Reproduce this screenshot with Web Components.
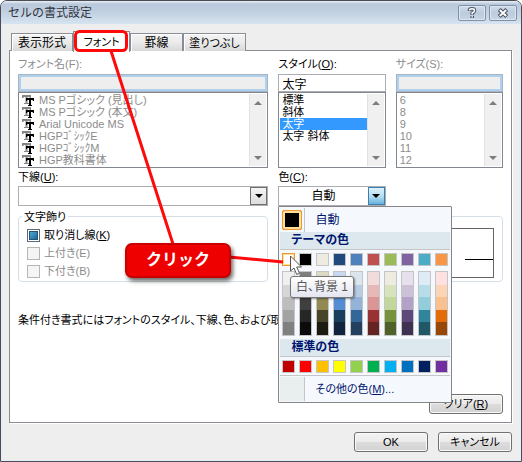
<!DOCTYPE html>
<html lang="ja">
<head>
<meta charset="utf-8">
<title>セルの書式設定</title>
<style>
body{margin:0;background:#fff;color:#000;font:11px/14px "Liberation Sans","Noto Sans CJK JP",sans-serif;font-feature-settings:"palt"}
</style>
</head>
<body>
<format-dialog></format-dialog>
<script>
const define=(name,html,setup)=>customElements.define(name,class extends HTMLElement{
  connectedCallback(){
    if(this.shadowRoot)return;
    const r=this.attachShadow({mode:'open'});
    r.innerHTML='<style>*{box-sizing:border-box}:host{box-sizing:border-box}button,input,select{font:inherit;font-feature-settings:inherit;color:inherit;margin:0;outline:none}</style>'+(typeof html==='function'?html(this):html);
    if(setup)setup(this,r);
  }
});

define('caption-button',el=>`<style>
:host{display:block}
button{display:grid;place-items:center;width:28px;height:16px;padding:0;border:1px solid #8291a8;border-radius:2px;background:linear-gradient(#cfdbe9,#bccbdc 50%,#c9d6e5);box-shadow:inset 0 0 0 1px #dce6f0}
svg{display:block}
</style><button aria-label="${el.getAttribute('label')}">${el.getAttribute('kind')==='help'
?'<svg width="10" height="12" viewBox="0 0 10 12"><path d="M2.5 4V3Q2.5 1.8 5 1.8T7.5 3.4Q7.5 4.8 5.2 6V8M5.2 9V11" fill="none" stroke="#4b5363" stroke-width="3.6"/><path d="M2.5 3.6V3Q2.5 1.8 5 1.8T7.5 3.4Q7.5 4.8 5.2 6V7.4M5.2 9.3V10.5" fill="none" stroke="#fff" stroke-width="1.6"/></svg>'
:'<svg width="12" height="10" viewBox="0 0 12 10"><path d="M2.2 1.5L9.8 8.5M9.8 1.5L2.2 8.5" stroke="#4b5363" stroke-width="4.2"/><path d="M2.8 2L9.2 8M9.2 2L2.8 8" stroke="#fff" stroke-width="2"/></svg>'}</button>`);

define('tab-item',`<style>
:host{display:block}
:host([kanji]){font-size:12px}
button{display:block;height:18px;width:100%;padding:0;line-height:16px;border:1px solid #898c95;border-bottom:0;background:linear-gradient(#f3f3f3,#ececec 45%,#d8d8d8);box-shadow:inset 1px 1px #fff}
:host([selected]) button{height:21px;margin-bottom:-1px;background:#fff;box-shadow:none}
</style><button role="tab"><slot></slot></button>`);

define('text-field',el=>`<style>
:host{display:block}
label{display:block;height:18px;line-height:16px}
input{display:block;width:100%;height:18px;padding:0 3px;border:1px solid #abadb3;background:#fff;border-radius:0;font-size:12px}
:host([disabled]) label{color:#8c8c8c}
:host([disabled]) input{background:#eee;box-shadow:inset 0 0 0 2px #b1d0ee;border-color:#a6b4c4}
</style><label for="f"><slot></slot></label><input id="f" value="${el.getAttribute('value')||''}" ${el.hasAttribute('disabled')?'disabled':''}>`);

define('list-box',el=>{
  const icon='<svg width="12" height="11" viewBox="0 0 12 11"><path d="M0 0h9v3H7.5V2H5.5v6H7v1H2V8h1.5V2H1.5v1H0z" fill="#858585"/><path d="M4 3h8v3h-1.2V5H9v5h1v1H6v-1h1V5H5.2v1H4z" fill="#000"/></svg>';
  const items=el.getAttribute('items').split('|'),sel=el.getAttribute('selected');
  return `<style>
:host{display:flex;height:76px;border:1px solid #828790;background:#fff;padding:1px}
ul{flex:1;min-width:0;margin:0;padding:0;list-style:none}
li{display:flex;align-items:center;gap:5px;height:12px;line-height:12px;padding-left:2px;white-space:nowrap}
svg{display:block;flex:none}
li[aria-selected=true]{background:#39f;color:#fff}
:host([disabled]) ul{color:#8c8c8c}
.bar{width:17px;display:flex;flex-direction:column;justify-content:space-between;align-items:center;padding:7px 0 6px;background:#f0f0f0;border-left:1px solid #e2e2e2}
i{border:4px solid transparent;border-top:0;border-bottom:4px solid #7d7d7d}
i+i{transform:rotate(180deg)}
</style><ul role="listbox" aria-label="${el.getAttribute('label')}">${items.map(t=>`<li role="option" aria-selected="${t===sel}">${el.hasAttribute('icons')?icon:''}<span>${t}</span></li>`).join('')}</ul><div class="bar"><i></i><i></i></div>`});

define('combo-box',el=>`<style>
:host{display:block;position:relative}
label{display:block;height:16px;line-height:15px}
.box{display:flex;height:20px;border:1px solid #abadb3;background:#fff;font-size:12px}
select{appearance:none;flex:1;min-width:0;border:0;background:none;padding:0 0 0 32px}
.arrow{flex:none;display:grid;place-items:center;width:17px;border:1px solid #707070;background:linear-gradient(#f4f4f4,#ddd)}
.arrow i{border:4px solid transparent;border-top-color:#000;border-bottom:0}
:host([open]) .arrow{border-color:#3c7fb1;background:linear-gradient(#dcf1fb,#b5def3 50%,#68b3db)}
::slotted(color-menu){position:absolute;top:100%;left:0;z-index:2}
</style><label for="s"><slot></slot></label><div class="box"><select id="s"><option>${el.getAttribute('value')||''}</option></select><span class="arrow"><i></i></span></div><slot name="menu"></slot>`);

define('group-box',`<style>
:host{display:block}
fieldset{height:66px;min-width:0;margin:0;padding:0 8px;border:1px solid #d5dfe5;border-radius:4px}
legend{display:block;padding:0 2px;margin:0 0 0 -5px;height:0;line-height:0}
</style><fieldset><legend><slot name="title"></slot></legend><slot></slot></fieldset>`);

define('check-option',el=>`<style>
:host{display:block}
label{display:flex;align-items:center;gap:4px;height:18px;line-height:16px}
input{appearance:none;width:13px;height:13px;border:1px solid #8e8f8f;background:#fff;box-shadow:inset 0 0 0 1px #f4f4f4}
:host([mixed]) input{border-color:#5a6a78;background:linear-gradient(135deg,#5ebbe6,#0a5587);box-shadow:inset 0 0 0 1px #fff,inset 0 0 0 2px #28526e}
:host([disabled]) label{color:#8c8c8c}
:host([disabled]) input{border-color:#b6b6b6;background:#f5f5f5}
</style><label><input type="checkbox" ${el.hasAttribute('disabled')?'disabled':''}><span><slot></slot></span></label>`,
(el,r)=>{if(el.hasAttribute('mixed'))r.querySelector('input').indeterminate=true});

define('push-button',`<style>
:host{display:block;width:74px}
button{display:block;width:100%;height:20px;padding:0;line-height:16px;border:1px solid #707070;border-radius:3px;background:linear-gradient(#f3f3f3,#ebebeb 50%,#ddd 50%,#d2d2d2);box-shadow:inset 0 0 0 1px #fafafa}
</style><button><slot></slot></button>`);

const THEME=[
['#ffffff','#f0f0f0','#d6d6d6','#bdbdbd','#a3a3a3','#808080'],
['#000000','#7f7f7f','#595959','#3f3f3f','#262626','#0c0c0c'],
['#eeece1','#ddd9c3','#c4bd97','#938953','#494429','#1d1b10'],
['#1f497d','#c6d9f0','#8db3e2','#548dd4','#1a3f5c','#0f243e'],
['#4f81bd','#dbe5ec','#b8cce4','#95b3d7','#336699','#244061'],
['#c0504d','#f2dcdb','#e5b9b7','#d99694','#993333','#632423'],
['#9bbb59','#eeece1','#d7e3bc','#c3d69b','#76923c','#4f6128'],
['#8064a2','#e5e0ec','#ccc1d9','#b2a2c7','#5f497a','#3f3151'],
['#4bacc6','#dfecf5','#b7dde8','#92cddc','#31859b','#205867'],
['#f79646','#ffe1e1','#fbd5b5','#fac08f','#e36c09','#974806']];
const STANDARD=['#c00000','#ff0000','#ffc000','#ffff00','#92d050','#00b050','#00b0f0','#0070c0','#002060','#7030a0'];
const chip=c=>`<button class="chip" aria-label="${c}" style="background:${c}"></button>`;

define('color-menu',`<style>
:host{display:block;width:174px;padding:1px;border:1px solid #868686;border-radius:1px;background:#f5f9fd;color:#00156e}
.row{display:flex;align-items:center;height:24px}
.gut{flex:none;display:grid;place-items:center;width:25px;height:24px;border-right:1px solid #c5c5c5}
.gut.plain{background:#e9eeee}
.auto{width:20px;height:20px;border:1px solid #f29436;border-radius:2px;padding:0;background:#000;box-shadow:inset 0 0 0 2px #ffe294}
.row span{padding-left:10px}
.row .large{font-size:12px}
h2{margin:0;height:18px;padding-left:11px;background:#dde7ee;border-bottom:1px solid #c5c5c5;font-size:12px;line-height:17px;font-weight:700}
.chips{display:flex;justify-content:space-between;padding:3px 2px}
.chip{flex:none;display:block;width:13px;height:13px;padding:0;border:1px solid #c5c5c5}
.current .chip:first-child{border-color:#f29436;box-shadow:inset 0 0 0 1px #ffe294}
.ramps{display:flex;justify-content:space-between;padding:2px 2px 3px}
.ramp{width:13px;border:1px solid #c5c5c5}
.ramp .chip{width:100%;border:0}
.ramp .chip:nth-child(even){height:12px}
.std{border-bottom:1px solid #c5c5c5;padding-bottom:2px;margin-bottom:1px}
</style>
<div class="row"><div class="gut"><button class="auto" aria-label="自動"></button></div><span class="large">自動</span></div>
<h2>テーマの色</h2>
<div class="chips current">${THEME.map(c=>chip(c[0])).join('')}</div>
<div class="ramps">${THEME.map(c=>`<div class="ramp">${c.slice(1).map(chip).join('')}</div>`).join('')}</div>
<h2>標準の色</h2>
<div class="chips std">${STANDARD.map(chip).join('')}</div>
<div class="row"><div class="gut plain"></div><span>その他の色(<u>M</u>)...</span></div>`);

define('pointer-tip',`<style>
:host{display:block;padding:2px 5px 0;height:22px;font-size:12px;line-height:17px;border:1px solid #767676;border-radius:3px;background:linear-gradient(#fff,#e4e5f0);box-shadow:1px 1px 2px #0006;color:#575757;white-space:nowrap}
svg{position:absolute;left:-2px;top:-22px}
</style><slot></slot><svg width="15" height="21" viewBox="0 0 15 21"><path d="M1.5 1V16L5 13L7.7 19.5L10.5 18.3L7.7 12H12.5Z" fill="#fff" stroke="#555" stroke-linejoin="round"/></svg>`);

define('click-guide',`<style>
:host{display:block;position:absolute;inset:0;z-index:4;pointer-events:none}
svg{position:absolute;left:0;top:0;overflow:visible}
.call{position:absolute;left:124px;top:242px;width:106px;height:35px;border:2px solid #c80000;border-radius:7px;background:#ee0000;box-shadow:2px 3px 4px #0009;color:#fff;font-size:16px;line-height:30px;font-weight:700;text-align:center;font-feature-settings:normal}
pointer-tip{position:absolute;left:289px;top:275px}
</style>
<svg width="1" height="1"><g fill="none" stroke="#ff0a0a"><rect x="74.5" y="30.5" width="51" height="19" rx="4" stroke-width="3"/><path d="M110 50L172 243M228 256L282 261" stroke-width="3"/></g></svg>
<div class="call">クリック</div><pointer-tip>白、背景 1</pointer-tip>`);

define('format-dialog',`<style>
:host{display:flex;flex-direction:column;position:relative;min-height:100vh;padding:0 2px 1px;border:1px solid #4c4c54;border-radius:7px 7px 0 0;background:#e6eef8;overflow:hidden}
header{display:flex;align-items:flex-start;gap:3px;height:23px;margin:0 -2px;padding:4px 4px 0 7px;background:linear-gradient(#e9f0f7,#b9c9db 3px,#bfcfe0 10px,#d6e3f0)}
h1{flex:1;margin:0;font-size:12px;font-weight:400;line-height:17px;font-feature-settings:normal;color:#303540}
main{flex:1;display:flex;flex-direction:column;padding:7px 7px 8px 6px;background:#eee}
.tabs{display:grid;grid-template-columns:62px 57px 53px 63px;align-items:end;height:19px;padding-left:2px;position:relative;z-index:1}
.panel{flex:1;display:flex;flex-direction:column;border:1px solid #898c95;background:#fff;box-shadow:1px 1px #fff;padding:5px 8px 8px}
.grid{display:grid;grid-template-columns:7fr 3fr 3fr;column-gap:10px}
.wide{grid-column:2/4}
combo-box{margin-top:2px}
group-box{margin-top:10px}
.checks{padding-top:9px}
.preview{height:50px;margin-top:11px;border:1px solid #646464;display:flex;justify-content:flex-end;align-items:center;padding-top:12px}
.preview i{width:28px;height:1px;background:#000}
.note{margin:31px 0 auto;white-space:nowrap}
.title{display:inline-block;background:#fff}
.clear{align-self:flex-end}
footer{display:flex;justify-content:flex-end;gap:10px;padding-top:9px}
</style>
<header><h1>セルの書式設定</h1><caption-button kind="help" label="ヘルプ"></caption-button><caption-button kind="close" label="閉じる"></caption-button></header>
<main>
<div class="tabs" role="tablist"><tab-item kanji>表示形式</tab-item><tab-item selected>フォント</tab-item><tab-item kanji>罫線</tab-item><tab-item>塗りつぶし</tab-item></div>
<section class="panel">
<div class="grid">
<text-field disabled>フォント名(F):</text-field><text-field value="太字">スタイル(<u>O</u>):</text-field><text-field disabled>サイズ(S):</text-field>
<list-box label="フォント名" disabled icons items="MS Pゴシック (見出し)|MS Pゴシック (本文)|Arial Unicode MS|HGPｺﾞｼｯｸE|HGPｺﾞｼｯｸM|HGP教科書体"></list-box>
<list-box label="スタイル" selected="太字" items="標準|斜体|太字|太字 斜体"></list-box>
<list-box label="サイズ" disabled items="6|8|9|10|11|12"></list-box>
<combo-box>下線(<u>U</u>):</combo-box>
<combo-box open value="自動">色(<u>C</u>):<color-menu slot="menu"></color-menu></combo-box><span></span>
<group-box><span slot="title" class="title">文字飾り</span><div class="checks"><check-option mixed>取り消し線(<u>K</u>)</check-option><check-option disabled>上付き(E)</check-option><check-option disabled>下付き(B)</check-option></div></group-box>
<group-box class="wide"><div class="preview"><i></i></div></group-box>
</div>
<p class="note">条件付き書式にはフォントのスタイル、下線、色、および取</p>
<push-button class="clear">クリア(<u>R</u>)</push-button>
</section>
<footer><push-button>OK</push-button><push-button>キャンセル</push-button></footer>
</main>
<click-guide></click-guide>`);
</script>
</body>
</html>
